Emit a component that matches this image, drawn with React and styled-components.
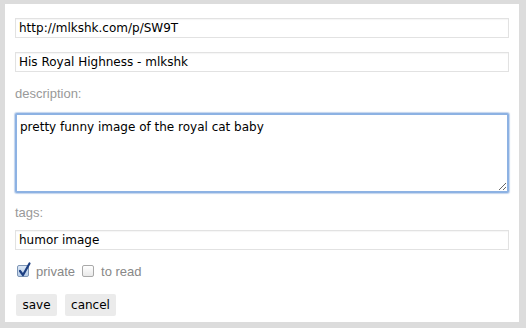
import React from 'react';
import styled, { createGlobalStyle } from 'styled-components';

const GlobalStyle = createGlobalStyle`
  html, body {
    margin: 0;
    padding: 0;
    background: #dcdcdc;
  }
`;

const Frame = styled.div`
  width: 526px;
  height: 328px;
  box-sizing: border-box;
  padding: 4px 7px 6px 5px;
  background: #dcdcdc;
`;

const Panel = styled.form`
  height: 100%;
  box-sizing: border-box;
  background: #fff;
  padding: 14px 10px 0 10px;
  display: flex;
  flex-direction: column;
`;

const TextInput = styled.input`
  display: block;
  width: 100%;
  height: 20px;
  box-sizing: border-box;
  margin: 0 0 ${({ $gap }) => $gap || 0}px 0;
  padding: 0 3px;
  border: 1px solid #e2e2e2;
  box-shadow: inset 0 1px 1px rgba(0, 0, 0, 0.04);
  font-family: "DejaVu Sans", sans-serif;
  font-size: 12px;
  color: #000;
  outline: none;
`;

const Label = styled.label`
  display: block;
  font-family: "Liberation Sans", Arial, sans-serif;
  font-size: 13px;
  color: #999;
  line-height: 15px;
  margin: ${({ $top }) => $top}px 0 ${({ $bottom }) => $bottom}px 0;
`;

const TextArea = styled.textarea`
  display: block;
  width: 100%;
  height: 80px;
  box-sizing: border-box;
  margin: 0;
  padding: 5px 3px;
  border: 2px solid #8db2e3;
  border-radius: 2px;
  box-shadow: 0 0 1px 1px rgba(120, 160, 215, 0.45);
  font-family: "DejaVu Sans", sans-serif;
  font-size: 12px;
  color: #000;
  outline: none;
  resize: both;
`;

const OptionRow = styled.div`
  display: flex;
  align-items: center;
  height: 14px;
  margin: 14px 0 0 2px;
  font-family: "Liberation Sans", Arial, sans-serif;
  font-size: 13px;
  color: #888;
`;

const Box = styled.span`
  position: relative;
  width: 12px;
  height: 12px;
  box-sizing: border-box;
  border: 1px solid ${({ $checked }) => ($checked ? '#7d95b5' : '#a9a9a9')};
  border-radius: 2px;
  background: ${({ $checked }) => ($checked ? 'linear-gradient(#dce8f6, #b8cde8)' : 'linear-gradient(#ffffff, #e9e9e9)')};
  margin-right: 7px;
  flex: none;
`;

const Tick = styled.svg`
  position: absolute;
  left: 0px;
  top: -4px;
`;

const OptionText = styled.span`
  margin-right: 7px;
`;

const ButtonRow = styled.div`
  display: flex;
  gap: 8px;
  margin: 16px 0 0 1px;
`;

const Button = styled.button`
  width: ${({ $w }) => $w}px;
  height: 22px;
  padding: 0;
  border: none;
  border-radius: 2px;
  background: #ebebeb;
  font-family: "DejaVu Sans", sans-serif;
  font-size: 12px;
  color: #000;
  cursor: pointer;
`;

const Checkbox = ({ checked }) => (
  <Box $checked={checked}>
    {checked && (
      <Tick width="13" height="15" viewBox="0 0 13 15">
        <path d="M2 9 L5 13 L11.5 1.5" fill="none" stroke="#1d3f82" strokeWidth="2.2" strokeLinecap="round" strokeLinejoin="round" />
      </Tick>
    )}
  </Box>
);

export default function App() {
  return (
    <>
      <GlobalStyle />
      <Frame>
        <Panel onSubmit={(e) => e.preventDefault()}>
          <TextInput $gap={14} defaultValue="http://mlkshk.com/p/SW9T" />
          <TextInput defaultValue="His Royal Highness - mlkshk" />
          <Label $top={14} $bottom={12}>description:</Label>
          <TextArea defaultValue="pretty funny image of the royal cat baby" />
          <Label $top={12} $bottom={10}>tags:</Label>
          <TextInput defaultValue="humor image" />
          <OptionRow>
            <Checkbox checked />
            <OptionText>private</OptionText>
            <Checkbox />
            <OptionText>to read</OptionText>
          </OptionRow>
          <ButtonRow>
            <Button $w={41}>save</Button>
            <Button $w={51}>cancel</Button>
          </ButtonRow>
        </Panel>
      </Frame>
    </>
  );
}
